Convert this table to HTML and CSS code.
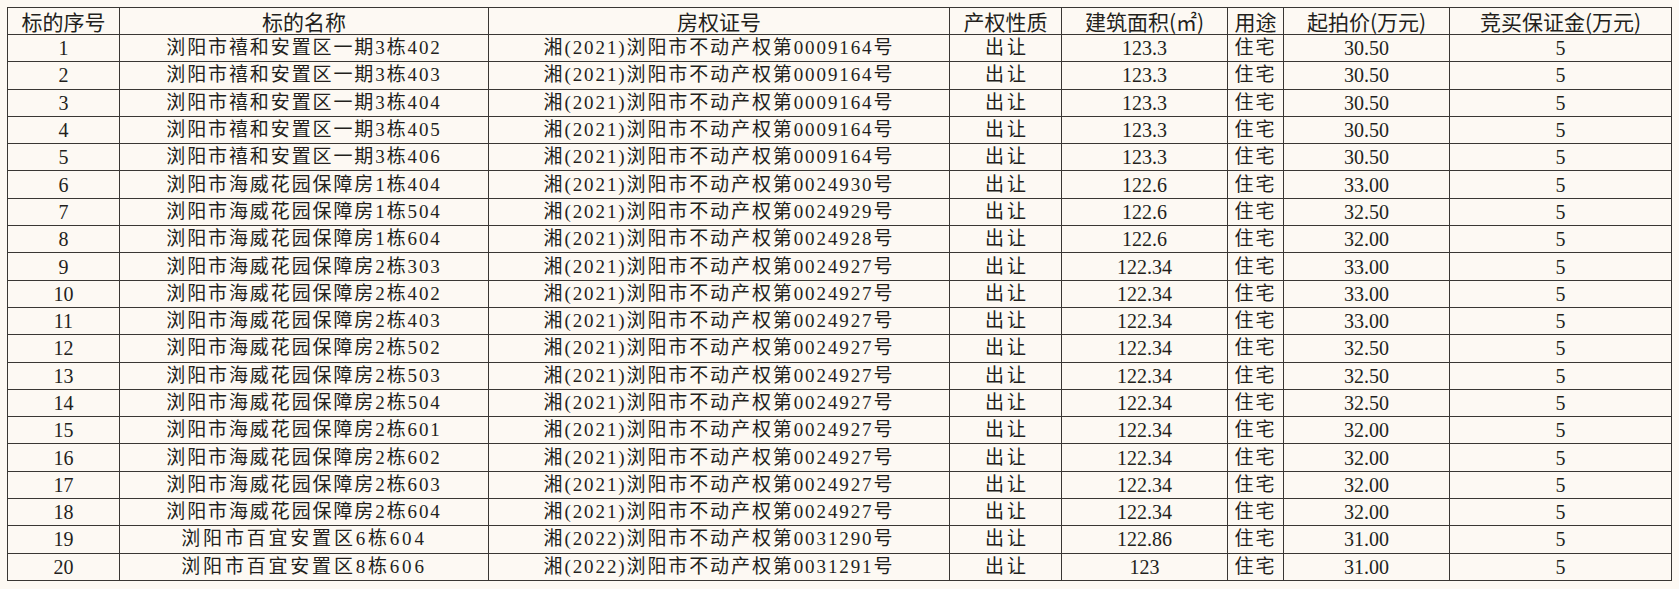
FILE: index.html
```html
<!DOCTYPE html>
<html lang="zh-CN">
<head>
<meta charset="utf-8">
<title>标的清单</title>
<link rel="stylesheet" href="styles.css">
</head>
<body>
<table class="lots">
  <colgroup>
    <col class="c-no"><col class="c-name"><col class="c-cert"><col class="c-type"><col class="c-area"><col class="c-use"><col class="c-price"><col class="c-dep">
  </colgroup>
  <thead>
    <tr><th>标的序号</th><th>标的名称</th><th>房权证号</th><th>产权性质</th><th>建筑面积(㎡)</th><th>用途</th><th>起拍价(万元)</th><th>竞买保证金(万元)</th></tr>
  </thead>
  <tbody>
    <tr><td>1</td><td class="t">浏阳市禧和安置区一期3栋402</td><td class="t">湘(2021)浏阳市不动产权第0009164号</td><td class="t wide">出让</td><td>123.3</td><td class="t">住宅</td><td>30.50</td><td>5</td></tr>
    <tr><td>2</td><td class="t">浏阳市禧和安置区一期3栋403</td><td class="t">湘(2021)浏阳市不动产权第0009164号</td><td class="t wide">出让</td><td>123.3</td><td class="t">住宅</td><td>30.50</td><td>5</td></tr>
    <tr><td>3</td><td class="t">浏阳市禧和安置区一期3栋404</td><td class="t">湘(2021)浏阳市不动产权第0009164号</td><td class="t wide">出让</td><td>123.3</td><td class="t">住宅</td><td>30.50</td><td>5</td></tr>
    <tr><td>4</td><td class="t">浏阳市禧和安置区一期3栋405</td><td class="t">湘(2021)浏阳市不动产权第0009164号</td><td class="t wide">出让</td><td>123.3</td><td class="t">住宅</td><td>30.50</td><td>5</td></tr>
    <tr><td>5</td><td class="t">浏阳市禧和安置区一期3栋406</td><td class="t">湘(2021)浏阳市不动产权第0009164号</td><td class="t wide">出让</td><td>123.3</td><td class="t">住宅</td><td>30.50</td><td>5</td></tr>
    <tr><td>6</td><td class="t">浏阳市海威花园保障房1栋404</td><td class="t">湘(2021)浏阳市不动产权第0024930号</td><td class="t wide">出让</td><td>122.6</td><td class="t">住宅</td><td>33.00</td><td>5</td></tr>
    <tr><td>7</td><td class="t">浏阳市海威花园保障房1栋504</td><td class="t">湘(2021)浏阳市不动产权第0024929号</td><td class="t wide">出让</td><td>122.6</td><td class="t">住宅</td><td>32.50</td><td>5</td></tr>
    <tr><td>8</td><td class="t">浏阳市海威花园保障房1栋604</td><td class="t">湘(2021)浏阳市不动产权第0024928号</td><td class="t wide">出让</td><td>122.6</td><td class="t">住宅</td><td>32.00</td><td>5</td></tr>
    <tr><td>9</td><td class="t">浏阳市海威花园保障房2栋303</td><td class="t">湘(2021)浏阳市不动产权第0024927号</td><td class="t wide">出让</td><td>122.34</td><td class="t">住宅</td><td>33.00</td><td>5</td></tr>
    <tr><td>10</td><td class="t">浏阳市海威花园保障房2栋402</td><td class="t">湘(2021)浏阳市不动产权第0024927号</td><td class="t wide">出让</td><td>122.34</td><td class="t">住宅</td><td>33.00</td><td>5</td></tr>
    <tr><td>11</td><td class="t">浏阳市海威花园保障房2栋403</td><td class="t">湘(2021)浏阳市不动产权第0024927号</td><td class="t wide">出让</td><td>122.34</td><td class="t">住宅</td><td>33.00</td><td>5</td></tr>
    <tr><td>12</td><td class="t">浏阳市海威花园保障房2栋502</td><td class="t">湘(2021)浏阳市不动产权第0024927号</td><td class="t wide">出让</td><td>122.34</td><td class="t">住宅</td><td>32.50</td><td>5</td></tr>
    <tr><td>13</td><td class="t">浏阳市海威花园保障房2栋503</td><td class="t">湘(2021)浏阳市不动产权第0024927号</td><td class="t wide">出让</td><td>122.34</td><td class="t">住宅</td><td>32.50</td><td>5</td></tr>
    <tr><td>14</td><td class="t">浏阳市海威花园保障房2栋504</td><td class="t">湘(2021)浏阳市不动产权第0024927号</td><td class="t wide">出让</td><td>122.34</td><td class="t">住宅</td><td>32.50</td><td>5</td></tr>
    <tr><td>15</td><td class="t">浏阳市海威花园保障房2栋601</td><td class="t">湘(2021)浏阳市不动产权第0024927号</td><td class="t wide">出让</td><td>122.34</td><td class="t">住宅</td><td>32.00</td><td>5</td></tr>
    <tr><td>16</td><td class="t">浏阳市海威花园保障房2栋602</td><td class="t">湘(2021)浏阳市不动产权第0024927号</td><td class="t wide">出让</td><td>122.34</td><td class="t">住宅</td><td>32.00</td><td>5</td></tr>
    <tr><td>17</td><td class="t">浏阳市海威花园保障房2栋603</td><td class="t">湘(2021)浏阳市不动产权第0024927号</td><td class="t wide">出让</td><td>122.34</td><td class="t">住宅</td><td>32.00</td><td>5</td></tr>
    <tr><td>18</td><td class="t">浏阳市海威花园保障房2栋604</td><td class="t">湘(2021)浏阳市不动产权第0024927号</td><td class="t wide">出让</td><td>122.34</td><td class="t">住宅</td><td>32.00</td><td>5</td></tr>
    <tr><td>19</td><td class="t loose">浏阳市百宜安置区6栋604</td><td class="t">湘(2022)浏阳市不动产权第0031290号</td><td class="t wide">出让</td><td>122.86</td><td class="t">住宅</td><td>31.00</td><td>5</td></tr>
    <tr><td>20</td><td class="t loose">浏阳市百宜安置区8栋606</td><td class="t">湘(2022)浏阳市不动产权第0031291号</td><td class="t wide">出让</td><td>123</td><td class="t">住宅</td><td>31.00</td><td>5</td></tr>
  </tbody>
</table>
</body>
</html>
```

FILE: styles.css
```css
html, body {
  margin: 0;
  padding: 0;
  background: #fdf9f3;
}

body {
  padding: 7px 0 0 7px;
}

.lots {
  border-collapse: collapse;
  table-layout: fixed;
  width: 1664px;
  color: #231f1c;
}

.c-no { width: 112px; }
.c-name { width: 369px; }
.c-cert { width: 461px; }
.c-type { width: 112px; }
.c-area { width: 166px; }
.c-use { width: 56px; }
.c-price { width: 166px; }
.c-dep { width: 222px; }

.lots th,
.lots td {
  border: 1px solid #3a3734;
  padding: 0;
  text-align: center;
  vertical-align: middle;
  white-space: nowrap;
  overflow: hidden;
}

.lots th {
  height: 26px;
  font-family: "Noto Sans CJK SC", "Noto Sans", sans-serif;
  font-size: 21px;
  font-weight: 400;
  line-height: 26px;
}

.lots td {
  height: 26.3px;
  font-family: "Liberation Serif", "Noto Sans CJK SC", serif;
  font-size: 20px;
  line-height: 26px;
}

.lots td.t {
  font-size: 19px;
  letter-spacing: 1.9px;
}

.lots td.wide {
  letter-spacing: 3px;
  padding-left: 3px;
}

.lots td.loose {
  letter-spacing: 2.8px;
}
```
